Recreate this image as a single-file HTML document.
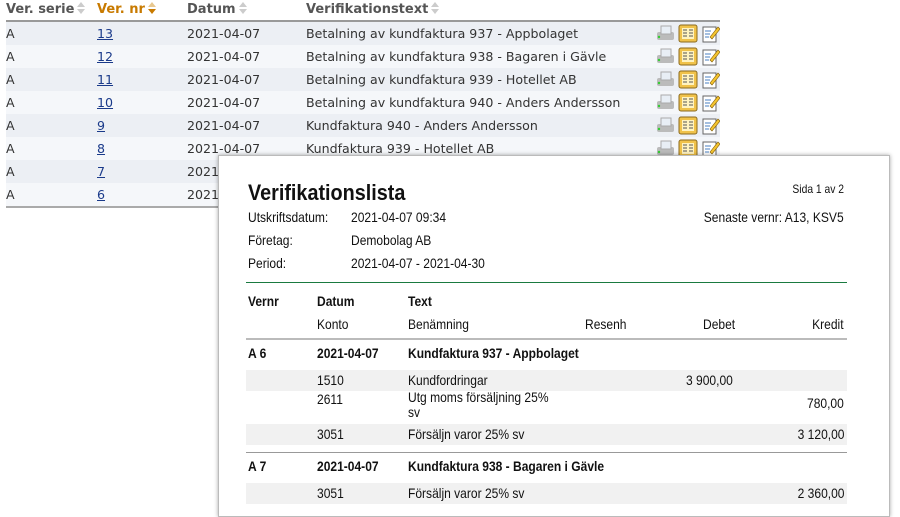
<!DOCTYPE html>
<html><head><meta charset="utf-8"><style>
body{margin:0;width:900px;height:506px;overflow:hidden;background:#fff;position:relative;font-family:"DejaVu Sans",Verdana,sans-serif}
.bg{position:absolute;left:6px;top:0;width:714px;border-bottom:2px solid #aaa}
.hd{height:20px;border-bottom:2px solid #999;font-size:13px;font-weight:bold;color:#555;position:relative}
.row{height:23px;position:relative;font-size:12.6px;color:#333}
.row:nth-child(even){background:#f5f7fa}.row:nth-child(odd){background:#eceff4}
.c{position:absolute;top:4px;white-space:nowrap}
.hd .c{top:2px}
a{color:#1a3a8a;text-decoration:underline}
.ar{display:inline-block;width:8px;height:12px;vertical-align:-1px;margin-left:3px;position:relative}
.ar:before,.ar:after{content:"";position:absolute;left:0;border-left:4px solid transparent;border-right:4px solid transparent}
.ar:before{top:0;border-bottom:5px solid #ccc}.ar:after{top:7px;border-top:5px solid #ccc}
.ar.o:before{border-bottom-color:#e8c890}.ar.o:after{border-top-color:#c87a00}
.ic{position:absolute;left:648px;top:2px;width:66px;height:19px}
.paper{position:absolute;left:218px;top:155px;width:670px;height:360px;background:#fff;border:1px solid #bbb;box-shadow:0 0 4px rgba(0,0,0,.35);font-family:"Liberation Sans",Arial,sans-serif;color:#111}
.p{position:absolute;white-space:nowrap;font-size:14px;transform:scaleX(.86);transform-origin:0 0}
.r{transform-origin:100% 0}
.b{font-weight:bold}
.g{position:absolute;left:27px;width:601px;background:#f1f1f1}
</style></head><body>
<div class="bg">
<div class="hd"><span class="c" style="left:0">Ver. serie<i class="ar"></i></span><span class="c" style="left:91px;color:#c87a00">Ver. nr<i class="ar o"></i></span><span class="c" style="left:181px">Datum<i class="ar"></i></span><span class="c" style="left:300px">Verifikationstext<i class="ar"></i></span></div>
<div id="rows"></div>
</div>
<script>
var d=[["13","Betalning av kundfaktura 937 - Appbolaget"],["12","Betalning av kundfaktura 938 - Bagaren i Gävle"],["11","Betalning av kundfaktura 939 - Hotellet AB"],["10","Betalning av kundfaktura 940 - Anders Andersson"],["9","Kundfaktura 940 - Anders Andersson"],["8","Kundfaktura 939 - Hotellet AB"],["7",""],["6",""]];
var ic='<svg class="ic" viewBox="0 0 66 19"><rect x="3" y="8" width="17" height="8" rx="2" fill="#bbb"/><rect x="7" y="2" width="10" height="8" fill="#e8eef5" stroke="#aaa"/><circle cx="5" cy="13" r="1.2" fill="#3c3"/><rect x="25" y="1" width="18" height="17" rx="2" fill="#f0c24a" stroke="#8a6a20"/><rect x="28" y="4" width="12" height="11" fill="#fff3c0"/><path d="M29 6h4M29 9h4M29 12h4M35 6h4M35 9h4M35 12h4" stroke="#555"/><rect x="49" y="3" width="13" height="15" fill="#fff" stroke="#666"/><path d="M51 7h6M51 10h5M51 13h4" stroke="#4a7fc0"/><path d="M56 13l8-10 2 2-8 10z" fill="#f4c430" stroke="#805a00" stroke-width=".6"/></svg>';
var h='';d.forEach(function(r){h+='<div class="row"><span class="c" style="left:0">A</span><span class="c" style="left:91px"><a>'+r[0]+'</a></span><span class="c" style="left:181px">2021-04-07</span><span class="c" style="left:300px">'+r[1]+'</span>'+ic+'</div>'});
document.getElementById('rows').innerHTML=h;
</script>
<div class="paper">
<div class="p b" style="left:29px;top:24px;font-size:22px;transform:scaleX(.9)">Verifikationslista</div>
<div class="p r" style="right:45px;top:26px;font-size:12px">Sida 1 av 2</div>
<div class="p" style="left:29px;top:53px">Utskriftsdatum:</div><div class="p" style="left:132px;top:53px">2021-04-07 09:34</div>
<div class="p r" style="right:45px;top:53px">Senaste vernr: A13, KSV5</div>
<div class="p" style="left:29px;top:76px">Företag:</div><div class="p" style="left:132px;top:76px">Demobolag AB</div>
<div class="p" style="left:29px;top:99px">Period:</div><div class="p" style="left:132px;top:99px">2021-04-07 - 2021-04-30</div>
<div style="position:absolute;left:27px;top:126px;width:601px;border-top:1px solid #1a7a40"></div>
<div class="p b" style="left:29px;top:137px">Vernr</div><div class="p b" style="left:98px;top:137px">Datum</div><div class="p b" style="left:189px;top:137px">Text</div>
<div class="p" style="left:98px;top:160px">Konto</div><div class="p" style="left:189px;top:160px">Benämning</div><div class="p" style="left:366px;top:160px">Resenh</div><div class="p" style="left:484px;top:160px">Debet</div><div class="p r" style="right:45px;top:160px">Kredit</div>
<div style="position:absolute;left:27px;top:182px;width:601px;border-top:2px solid #bbb"></div>
<div class="p b" style="left:29px;top:189px">A 6</div><div class="p b" style="left:98px;top:189px">2021-04-07</div><div class="p b" style="left:189px;top:189px">Kundfaktura 937 - Appbolaget</div>
<div class="g" style="top:214px;height:21px"></div>
<div class="p" style="left:98px;top:216px">1510</div><div class="p" style="left:189px;top:216px">Kundfordringar</div><div class="p" style="left:467px;top:216px">3 900,00</div>
<div class="p" style="left:98px;top:235px">2611</div><div class="p" style="left:189px;top:234px;line-height:15px">Utg moms försäljning 25%<br>sv</div><div class="p r" style="right:45px;top:239px">780,00</div>
<div class="g" style="top:268px;height:21px"></div>
<div class="p" style="left:98px;top:270px">3051</div><div class="p" style="left:189px;top:270px">Försäljn varor 25% sv</div><div class="p r" style="right:45px;top:270px">3 120,00</div>
<div style="position:absolute;left:27px;top:296px;width:601px;border-top:1px solid #999"></div>
<div class="p b" style="left:29px;top:302px">A 7</div><div class="p b" style="left:98px;top:302px">2021-04-07</div><div class="p b" style="left:189px;top:302px">Kundfaktura 938 - Bagaren i Gävle</div>
<div class="g" style="top:327px;height:21px"></div>
<div class="p" style="left:98px;top:329px">3051</div><div class="p" style="left:189px;top:329px">Försäljn varor 25% sv</div><div class="p r" style="right:45px;top:329px">2 360,00</div>
</div>
</body></html>
